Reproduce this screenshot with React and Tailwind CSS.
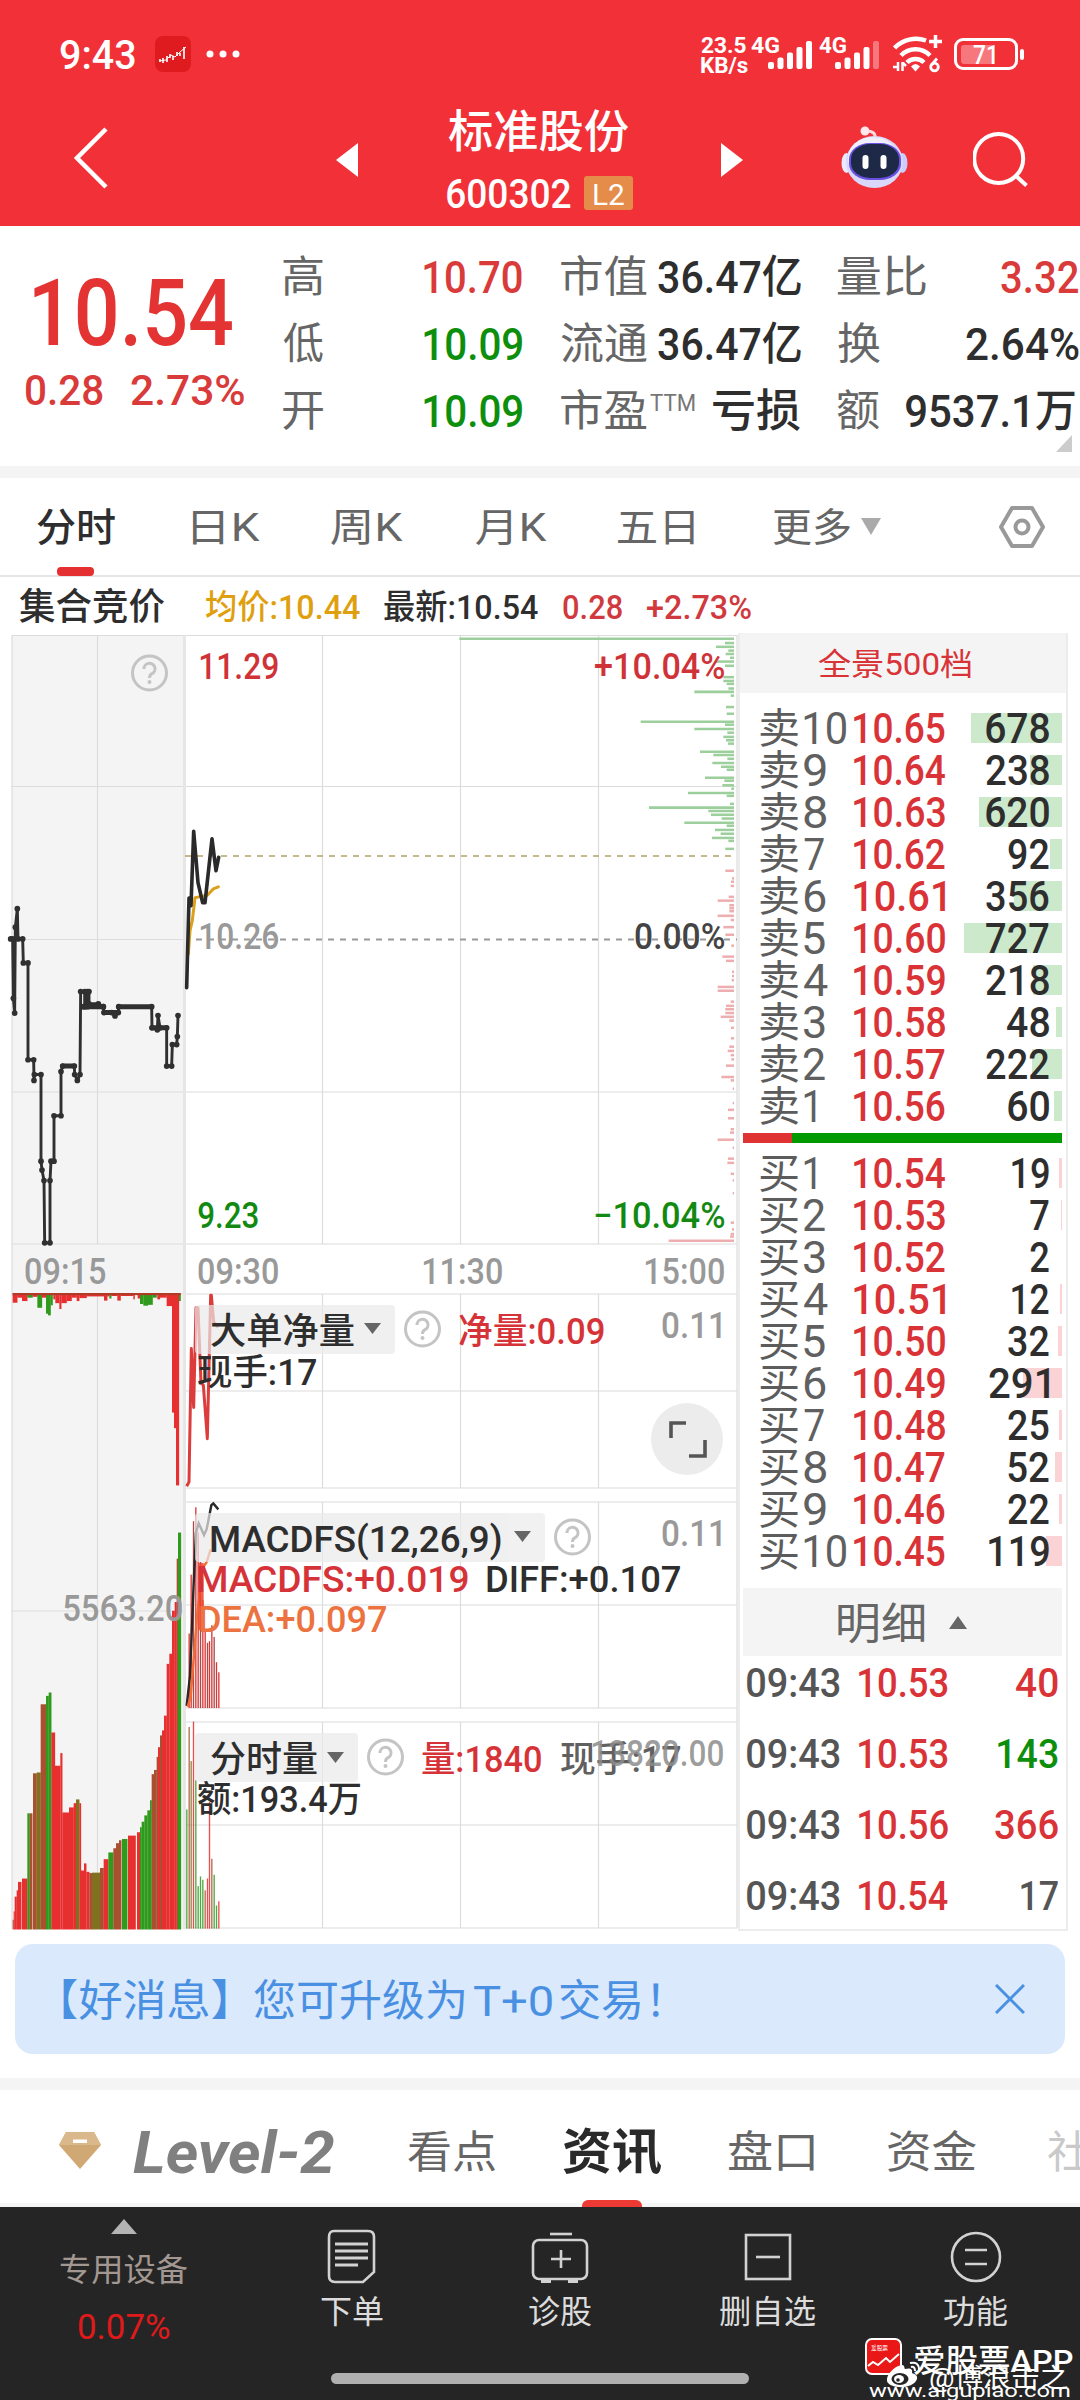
import React, { useLayoutEffect, useRef, useState } from "react";

const FONT = "font-['Roboto','Noto_Sans_CJK_SC',sans-serif]";

/* One line of text whose drawn width is `w` pixels. */
function T({ w, className = "", children }) {
  const ref = useRef(null);
  const [transform, setTransform] = useState("none");
  useLayoutEffect(() => {
    const cs = getComputedStyle(ref.current);
    const ctx = document.createElement("canvas").getContext("2d");
    ctx.font = `${cs.fontStyle} ${cs.fontWeight} ${cs.fontSize} ${cs.fontFamily}`;
    const m = ctx.measureText(ref.current.textContent);
    const s = w / (m.actualBoundingBoxLeft + m.actualBoundingBoxRight);
    setTransform(`translate(${m.actualBoundingBoxLeft * s}px, 1.5px) scaleX(${s})`);
  }, [w, children]);
  return (
    <span className={`block shrink-0 whitespace-nowrap ${className}`} style={{ width: w }}>
      <span ref={ref} className="inline-block origin-left" style={{ transform }}>
        {children}
      </span>
    </span>
  );
}

function Signal({ dim }) {
  return (
    <svg width="44" height="28" viewBox="0 0 44 28" fill="#fff">
      <rect x="0" y="21" width="6" height="7" rx="2" />
      <rect x="9.500" y="16.500" width="6" height="11.500" rx="2" />
      <rect x="19" y="11.500" width="6" height="16.500" rx="2" />
      <rect x="28.500" y="6" width="6" height="22" rx="2" />
      <rect x="38" y="0" width="6" height="28" rx="2" opacity={dim ? 0.35 : 1} />
    </svg>
  );
}

function StatusBar() {
  return (
    <div className="flex h-[108px] items-center text-white">
      <T w={75} className="ml-[60px] text-[40px] leading-[40px] font-medium">9:43</T>
      <svg className="ml-[20px]" width="36" height="36" viewBox="0 0 36 36">
        <rect width="36" height="36" rx="8" fill="#e01b1f" />
        <path d="M5 23v3M8 22v5M12 20v6M15 18v4M18 20v4M22 16v4M25 17v3M29 11v12" stroke="#fff" strokeWidth="1.600" />
        <path d="M4 25l7-1 5-5 4 2 5-5 6-5" stroke="#fff" strokeWidth="1" fill="none" />
      </svg>
      <svg className="ml-[15px]" width="34" height="8" fill="#fff">
        <circle cx="4" cy="4" r="3.500" /><circle cx="17" cy="4" r="3.500" /><circle cx="30" cy="4" r="3.500" />
      </svg>
      <div className="ml-[461px] w-[47px] text-[22px] font-bold leading-[20px]">
        <T w={45}>23.5</T>
        <T w={47}>KB/s</T>
      </div>
      <T w={28} className="-mt-[20px] ml-[3px] text-[22px] font-bold leading-[20px]">4G</T>
      <div className="-ml-[11px] mt-[2px]"><Signal /></div>
      <T w={27} className="-mt-[20px] ml-[7px] text-[22px] font-bold leading-[20px]">4G</T>
      <div className="-ml-[11px] mt-[2px]"><Signal dim /></div>
      <svg className="ml-[14px]" width="50" height="38" viewBox="0 0 50 38" fill="none" stroke="#fff" strokeWidth="4.500">
        <path d="M1.500 13A30 30 0 0 1 33 5.500" />
        <path d="M8 20.500A20 20 0 0 1 37 20.500" />
        <path d="M14 27.500A12 12 0 0 1 31 27.500" />
        <path d="M18 31.500q4.500-5 9 0l-4.500 5z" fill="#fff" stroke="none" />
        <path d="M36 6.500h13M42.500 0v13" strokeWidth="3.500" />
        <path d="M5 27v9M9.500 27v9M0 32h4M10 28l3 3" strokeWidth="2.500" />
        <circle cx="41.500" cy="32" r="3.800" strokeWidth="2.800" /><path d="M44 23.500l-5.500 6.500" strokeWidth="2.800" />
      </svg>
      <div className="ml-[11px] flex h-[32px] w-[64px] items-center rounded-[9px] border-[3px] border-white p-[4px]">
        <div className="flex h-[19px] w-[33px] items-center rounded-[3px] bg-white/35 pl-[12px]">
          <T w={22} className="text-[25px] font-medium leading-[18px]">71</T>
        </div>
      </div>
      <div className="ml-[2px] h-[11px] w-[4px] rounded-full bg-white" />
    </div>
  );
}

function Header() {
  return (
    <header className="h-[226px] shrink-0 bg-[#f13038]">
      <StatusBar />
      <div className="flex h-[118px] items-start text-white">
        <svg className="ml-[73px] mt-[19px]" width="37" height="62" viewBox="0 0 37 62" fill="none" stroke="#fff" strokeWidth="4.500">
          <path d="M33 2L4 31l29 29" />
        </svg>
        <svg className="ml-[226px] mt-[35px]" width="22" height="34" fill="#fff"><path d="M22 0v34L0 17z" /></svg>
        <div className="ml-[88px] w-[190px]">
          <T w={181} className="ml-[2px] text-[45px] font-medium leading-[46px]">标准股份</T>
          <div className="mt-[22px] flex h-[34px] items-center">
            <T w={124} className="ml-px text-[40px] font-medium leading-[40px]">600302</T>
            <div className="ml-[13px] flex h-[34px] w-[49px] items-center justify-center rounded-[3px] bg-[#e58c4a]">
              <T w={30} className="text-[30px] leading-[32px]">L2</T>
            </div>
          </div>
        </div>
        <svg className="ml-[85px] mt-[35px]" width="22" height="34" fill="#fff"><path d="M0 0v34l22-17z" /></svg>
        <svg className="ml-[98px] mt-[18px]" width="68" height="64" viewBox="0 0 68 64">
          <path d="M34 12Q35 5 25 5" stroke="#ffd9e0" strokeWidth="3" fill="none" />
          <circle cx="24" cy="5" r="4.500" fill="#ffe9ee" />
          <ellipse cx="5.500" cy="37" rx="5" ry="10" fill="#e9eaff" />
          <ellipse cx="61.500" cy="37" rx="5" ry="10" fill="#c9cdfa" />
          <ellipse cx="33.500" cy="36" rx="28.500" ry="26" fill="#d9d8fb" />
          <ellipse cx="32" cy="32" rx="25" ry="21" fill="#f0effc" />
          <rect x="8" y="17" width="52" height="37" rx="21" ry="16" fill="#6a50e0" />
          <rect x="10" y="18" width="48" height="34" rx="19" ry="15" fill="#1d2947" />
          <rect x="21.500" y="29" width="6" height="14" rx="3" fill="#fff" />
          <rect x="39.500" y="29" width="6" height="14" rx="3" fill="#fff" />
        </svg>
        <svg className="ml-[64px] mt-[23px]" width="58" height="58" viewBox="0 0 58 58" fill="none" stroke="#fff" strokeWidth="4">
          <circle cx="25.700" cy="27.400" r="24.500" /><path d="M43 45l10.500 9.500" />
        </svg>
      </div>
    </header>
  );
}

const LABEL = "text-[43px] leading-[67px] text-[#666]";
const VALUE = "text-[45px] leading-[67px] font-medium";

function Quote() {
  return (
    <section className="relative flex h-[240px] shrink-0 bg-white">
      <div className="w-[283px] shrink-0 pt-[46px] text-[#e43333]">
        <T w={198} className="ml-[34px] text-[92px] font-medium leading-[80px]">10.54</T>
        <div className="mt-[11px] flex text-[43px] font-medium leading-[50px] text-[#d93a3a]">
          <T w={77} className="ml-[26px]">0.28</T>
          <T w={113} className="ml-[28px]">2.73%</T>
        </div>
      </div>
      <div className="grow pt-[16px]">
        <div className="flex h-[67px]">
          <T w={40} className={LABEL}>高</T>
          <T w={98} className={`${VALUE} ml-[101px] text-[#d93a3a]`}>10.70</T>
          <T w={86} className={`${LABEL} ml-[39px]`}>市值</T>
          <T w={143} className={`${VALUE} ml-[11px] text-[#2e2e2e]`}>36.47亿</T>
          <T w={88} className={`${LABEL} ml-[37px]`}>量比</T>
          <T w={77} className={`${VALUE} ml-auto mr-[2px] text-[#d93a3a]`}>3.32</T>
        </div>
        <div className="flex h-[67px]">
          <T w={40} className={LABEL}>低</T>
          <T w={98} className={`${VALUE} ml-[101px] text-[#0d8f0d]`}>10.09</T>
          <T w={86} className={`${LABEL} ml-[39px]`}>流通</T>
          <T w={143} className={`${VALUE} ml-[11px] text-[#2e2e2e]`}>36.47亿</T>
          <T w={42} className={`${LABEL} ml-[37px]`}>换</T>
          <T w={113} className={`${VALUE} ml-auto mr-px text-[#2e2e2e]`}>2.64%</T>
        </div>
        <div className="flex h-[67px]">
          <T w={40} className={LABEL}>开</T>
          <T w={98} className={`${VALUE} ml-[101px] text-[#0d8f0d]`}>10.09</T>
          <T w={86} className={`${LABEL} ml-[39px]`}>市盈</T>
          <T w={45} className="ml-[3px] pt-[8px] text-[23px] leading-[36px] text-[#777]">TTM</T>
          <T w={87} className={`${VALUE} ml-[18px] text-[#2e2e2e]`}>亏损</T>
          <T w={42} className={`${LABEL} ml-[37px]`}>额</T>
          <T w={169} className={`${VALUE} ml-auto mr-[5px] text-[#2e2e2e]`}>9537.1万</T>
        </div>
      </div>
      <svg className="absolute bottom-[14px] right-[8px]" width="16" height="17" fill="#ccc"><path d="M16 0v17H0z" /></svg>
    </section>
  );
}

function PeriodTabs() {
  const t = "text-[39px] leading-[97px] text-[#666]";
  return (
    <nav className="flex h-[99px] shrink-0 border-b-2 border-[#e6e6e6] bg-white">
      <div className="ml-[37px] w-[78px]">
        <T w={78} className="h-[89px] pt-[4px] text-[39px] font-medium leading-[89px] text-[#2e2e2e]">分时</T>
        <div className="ml-[20px] h-[9px] w-[37px] rounded-[4px] bg-[#e43030]" />
      </div>
      <T w={68} className={`${t} ml-[77px]`}>日K</T>
      <T w={72} className={`${t} ml-[71px]`}>周K</T>
      <T w={71} className={`${t} ml-[73px]`}>月K</T>
      <T w={76} className={`${t} ml-[71px]`}>五日</T>
      <T w={77} className={`${t} ml-[79px]`}>更多</T>
      <svg className="ml-[11px] mt-[40px]" width="20" height="17" fill="#aaa"><path d="M0 0h20L10 17z" /></svg>
      <svg className="ml-[118px] mt-[27px]" width="46" height="44" viewBox="0 0 46 44" fill="none" stroke="#999" strokeWidth="4" strokeLinejoin="round">
        <path d="M13 3h20l11 19-11 19H13L2 22z" /><circle cx="23" cy="22" r="6.500" />
      </svg>
    </nav>
  );
}

function InfoRow() {
  return (
    <div className="flex h-[57px] shrink-0 items-center bg-white text-[34px] leading-[57px]">
      <T w={146} className="ml-[19px] text-[37px] font-medium text-[#2e2e2e]">集合竞价</T>
      <T w={154} className="ml-[41px] font-medium text-[#dfa010]">均价:10.44</T>
      <T w={154} className="ml-[24px] font-medium text-[#2e2e2e]">最新:10.54</T>
      <T w={59} className="ml-[25px] font-medium text-[#d03a3e]">0.28</T>
      <T w={104} className="ml-[25px] font-medium text-[#d03a3e]">+2.73%</T>
    </div>
  );
}

const R = "#e82f2f", G = "#2f9a1c", B = "#a85030", O = "#80701f";

/* Resting orders by price level: [y, left end] */
const asks = [[21,298],[31,1095],[40,1068],[49,1105],[57,1097],[66,1110],[75,1066],[85,1095],[112,1090],[121,1090],[128,1100],[139,1105],[147,1003],[156,1112],[183,1098],[199,1100],[218,842],[225,1095],[235,1003],[244,1102],[254,1090],[262,1098],[270,1104],[289,1020],[297,1060],[306,1102],[316,1057],[325,1083],[332,1100],[351,1035],[358,1093],[369,1087],[377,1114],[387,984],[394,1100],[413,1110],[422,867],[430,1045],[439,1053],[448,1085],[458,973],[465,1100],[475,1065],[484,1082],[494,1056],[501,1105],[520,1096]];
const bids = [[572,1096],[590,1116],[598,1113],[608,1112],[634,1106],[643,1073],[654,1108],[661,1108],[668,1108],[679,1073],[689,1112],[706,1090],[724,1096],[750,1114],[776,1087],[786,1098],[812,1116],[822,1116],[832,1115],[848,1073],[857,1073],[883,1112],[893,1098],[901,1096],[910,1096],[919,1082],[928,1108],[945,1113],[970,1113],[990,1108],[1000,1103],[1010,1112],[1020,1114],[1035,1098],[1062,1084],[1070,1112],[1090,1118],[1124,1118],[1140,1104],[1160,1104],[1186,1112],[1194,1110],[1211,1073],[1230,1118],[1256,1104],[1266,1102],[1292,1112],[1308,1118],[1338,1118],[1408,1112],[1424,1116],[1435,1112],[1441,1110],[1451,926]];

const auction = "32,734 38,734 40,875 44,910 46,706 52,662 54,734 68,734 70,791 84,791 84,1021 101,1021 102,1070 103,1056 123,1056 123,1262 126,1283 132,1308 134,1456 150,1456 150,1308 153,1262 162,1262 162,1154 183,1154 183,1049 188,1036 223,1036 224,1056 232,1070 240,1056 242,859 254,859 254,895 262,895 262,859 267,859 267,888 295,888 310,895 250,895 310,895 312,909 335,909 345,917 355,909 356,895 455,895 456,945 472,950 474,916 480,945 500,945 500,1036 515,1036 517,985 530,985 532,966 534,916";

/* Auction volume columns: [x0, x1, top, colour] */
const columns = [[38,41,1520,B],[41,44,1500,R],[44,50,1465,R],[50,54,1450,R],[54,64,1430,R],[66,82,1422,R],[82,89,1267,G],[89,97,1267,B],[99,110,1172,B],[110,122,1170,O],[122,138,1008,B],[138,146,988,G],[146,154,980,G],[154,165,1075,R],[165,181,1154,R],[181,187,1124,R],[187,207,1265,R],[207,221,1253,R],[221,228,1243,R],[228,238,1234,O],[238,243,1243,R],[243,252,1403,R],[252,259,1386,R],[259,268,1406,R],[268,276,1409,B],[276,300,1408,O],[300,311,1397,B],[311,325,1376,R],[325,340,1360,G],[340,348,1350,B],[348,357,1338,B],[357,364,1331,B],[366,382,1328,G],[384,407,1320,R],[411,420,1312,R],[420,425,1300,G],[425,433,1287,G],[433,442,1272,G],[442,450,1260,G],[450,455,1236,G],[455,462,1174,B],[462,470,1164,B],[470,474,1133,B],[474,480,1110,R],[480,486,1082,B],[486,492,1070,R],[492,500,1035,R],[500,508,912,R],[508,516,888,R],[516,524,786,R],[524,530,765,R],[530,534,662,B],[534,543,600,G]];
const flows = [[38,52,54,R],[52,66,42,R],[66,82,50,R],[82,98,42,G],[98,112,40,R],[112,126,66,G],[126,138,42,R],[138,144,80,G],[144,152,84,G],[152,158,60,G],[160,166,46,R],[166,178,55,R],[178,184,69,R],[184,200,55,R],[200,215,50,R],[215,230,42,R],[230,238,50,R],[238,260,43,R],[260,312,39,R],[312,322,49,R],[322,328,39,R],[328,334,44,G],[334,352,38,R],[352,362,49,R],[362,400,38,R],[400,404,46,R],[413,420,44,R],[420,430,57,G],[430,444,61,G],[444,458,59,G],[458,470,42,G],[472,480,46,R],[480,500,42,R],[500,516,62,R],[516,522,315,R],[522,528,352,R],[528,537,488,R],[537,542,50,G]];
const macd = [[567,840],[573,700],[580,573],[587,540],[594,600],[601,670],[608,760],[615,830],[622,862],[628,858],[635,820],[642,848],[649,908],[656,932]];
const volume = [[560,1258,G],[567,1062,B],[573,1143,O],[580,1049,R],[587,1188,G],[594,1440,G],[601,1417,G],[608,1425,G],[615,1450,B],[622,1422,R],[628,1240,R],[635,1375,B],[642,1413,G],[649,1486,G],[656,1476,R]];

function Question({ cx, cy }) {
  return (
    <g fill="none" stroke="#c4c4c4" strokeWidth="3">
      <circle cx={cx} cy={cy} r="17" />
      <path d={`M${cx - 5.5} ${cy - 4}a5.500 5.500 0 1 1 8 4.700q-2.500 1.300-2.500 4.300`} />
      <circle cx={cx} cy={cy + 9} r="2" fill="#c4c4c4" stroke="none" />
    </g>
  );
}

function ChartCanvas() {
  return (
    <svg className="block" width="738" height="1297" viewBox="0 634 738 1297">
      <rect x="12" y="635" width="172" height="1294" fill="#f4f4f4" />
      <g stroke="#dcdcdc" strokeWidth="1.200" fill="none">
        <path d="M12 635.500H737M12 786.500H737M12 939.500H184M184 1092H737M12 1092H184M12 1244H737M12 635V1929M97.500 635V1244M97.500 1294V1929M12 1294H737M184 1391H737M184 1488H737M184 1502H737M184 1605H737M12 1611H184M184 1708H737M184 1722H737M184 1825H737M184 1928H737M737 635V1928" />
        <path d="M322.500 635V1244M460.500 635V1244M598.500 635V1244M322.500 1294V1488M460.500 1294V1488M598.500 1294V1488M322.500 1502V1708M460.500 1502V1708M598.500 1502V1708M322.500 1722V1928M460.500 1722V1928M598.500 1722V1928" />
      </g>
      <path d="M184.500 635V1929" stroke="#e6e6e6" strokeWidth="3" />
      <path d="M185 856H737" stroke="#b3a263" strokeWidth="1.600" strokeDasharray="6 6" />
      <path d="M196 939.500H737" stroke="#999" strokeWidth="2" strokeDasharray="6 6" />
      <g transform="translate(360 630) scale(.333333 .420918)">
        {asks.map(([y, x]) => <path key={y} d={`M${x} ${y}H1122`} stroke="#9ccf9c" strokeWidth="6" />)}
        {bids.map(([y, x]) => <path key={y} d={`M${x} ${y}H1122`} stroke="#eeaeb0" strokeWidth="6" />)}
      </g>
      <g transform="translate(0 630) scale(.333333 .420918)" fill="none" strokeLinejoin="round" strokeLinecap="round">
        <polyline points={auction} stroke="#303030" strokeWidth="2.900" vectorEffect="non-scaling-stroke" />
        {auction.split(" ").map((p, i) => {
          const [x, y] = p.split(",");
          return <ellipse key={i} cx={x} cy={y} rx="8.500" ry="6.800" fill="#303030" />;
        })}
        <path d="M188 1036H223M250 895H310M312 909H350M356 895H455M456 945H500" stroke="#303030" strokeWidth="5" vectorEffect="non-scaling-stroke" />
        <polyline points="565,770 570,715 577,690 585,636 597,634 622,630 640,615 655,610" stroke="#dda01c" strokeWidth="3" vectorEffect="non-scaling-stroke" />
        <polyline points="560,850 567,637 573,655 581,478 594,600 608,648 615,648 636,496 648,572 656,540" stroke="#2a2a2a" strokeWidth="3.600" vectorEffect="non-scaling-stroke" />
      </g>
      <g transform="translate(0 1280) scale(.333333 .420918)" fill="none">
        {columns.map(([a, b, t, c]) => <rect key={a} x={a} y={t} width={b - a + 0.4} height={1543 - t} fill={c} />)}
        {flows.map(([a, b, t, c]) => <rect key={a} x={a} y="31" width={b - a + 0.4} height={t - 31} fill={c} />)}
        <rect x="38" y="31" width="504" height="5" fill="#b03a28" />
        <polyline points="560,490 567,480 574,163 581,303 588,66 594,66 603,245 610,250 622,377 632,36 634,36 641,100 655,112" stroke="#dc3c3c" strokeWidth="3" vectorEffect="non-scaling-stroke" strokeLinejoin="round" />
        {macd.map(([x, t], i) => <rect key={x} x={x - 1.5} y={t} width="4" height={1017 - t} fill={i % 3 === 2 ? "#a84a4a" : "#dc3535"} />)}
        <polyline points="560,1012 570,940 580,740 588,600 596,578 603,590 612,606 620,592 634,535 640,531 655,545" stroke="#282828" strokeWidth="2.400" vectorEffect="non-scaling-stroke" />
        <polyline points="563,1014 572,990 582,890 592,790 601,735 604,690 620,670 632,640" stroke="#f26b33" strokeWidth="2.400" vectorEffect="non-scaling-stroke" />
        <rect x="596" y="672" width="15" height="160" fill="#f0452b" opacity=".85" />
        {volume.map(([x, t, c]) => <rect key={x} x={x - 1.5} y={t} width="4" height={1541 - t} fill={c} opacity=".85" />)}
      </g>
      <g fill="#ebebeb" opacity=".7">
        <rect x="195" y="1305" width="200" height="49" rx="4" />
        <rect x="195" y="1513" width="350" height="49" rx="4" />
        <rect x="195" y="1733" width="163" height="49" rx="4" />
      </g>
      <g fill="#666">
        <path d="M364 1323h17l-8.500 11zM514 1531h17l-8.500 11zM327 1752h17l-8.500 11z" />
      </g>
      <Question cx={149.5} cy={673} />
      <Question cx={422.5} cy={1329} />
      <Question cx={572.5} cy={1537} />
      <Question cx={385.5} cy={1757} />
      <circle cx="687" cy="1439" r="36" fill="#ececec" />
      <path d="M671 1438v-15h15M689 1456h16v-16" fill="none" stroke="#555" strokeWidth="3.600" />
    </svg>
  );
}

function Charts() {
  const t = "absolute leading-[40px] font-medium";
  return (
    <div className="relative h-[1297px] w-[738px] shrink-0 text-[36px] text-[#2e2e2e]">
      <ChartCanvas />
      <T w={78} className={`${t} left-[200px] top-[11px] text-[#cf3338]`}>11.29</T>
      <T w={129} className={`${t} left-[595px] top-[11px] text-[#cf3338]`}>+10.04%</T>
      <T w={78} className={`${t} left-[200px] top-[281px] text-[#999]`}>10.26</T>
      <T w={89} className={`${t} left-[635px] top-[281px] text-[#444]`}>0.00%</T>
      <T w={60} className={`${t} left-[198px] top-[560px] text-[#128a12]`}>9.23</T>
      <T w={129} className={`${t} left-[595px] top-[560px] text-[#128a12]`}>−10.04%</T>
      <T w={80} className={`${t} left-[25px] top-[616px] text-[#999]`}>09:15</T>
      <T w={80} className={`${t} left-[198px] top-[616px] text-[#999]`}>09:30</T>
      <T w={79} className={`${t} left-[423px] top-[616px] text-[#999]`}>11:30</T>
      <T w={79} className={`${t} left-[645px] top-[616px] text-[#999]`}>15:00</T>

      <T w={143} className={`${t} left-[211px] top-[676px]`}>大单净量</T>
      <T w={145} className={`${t} left-[459px] top-[676px] text-[#d63338]`}>净量:0.09</T>
      <T w={59} className={`${t} left-[662px] top-[670px] text-[#999]`}>0.11</T>
      <T w={118} className={`${t} left-[198px] top-[717px]`}>现手:17</T>

      <T w={290} className={`${t} left-[211px] top-[884px]`}>MACDFS(12,26,9)</T>
      <T w={59} className={`${t} left-[662px] top-[878px] text-[#999]`}>0.11</T>
      <T w={270} className={`${t} left-[198px] top-[924px] text-[#d63338]`}>MACDFS:+0.019</T>
      <T w={193} className={`${t} left-[487px] top-[924px]`}>DIFF:+0.107</T>
      <T w={186} className={`${t} left-[200px] top-[964px] text-[#ec7340]`}>DEA:+0.097</T>
      <T w={118} className={`${t} left-[64px] top-[953px] text-[#999]`}>5563.20</T>

      <T w={106} className={`${t} left-[211px] top-[1104px]`}>分时量</T>
      <T w={119} className={`${t} left-[422px] top-[1104px] text-[#d63338]`}>量:1840</T>
      <T w={119} className={`${t} left-[561px] top-[1104px] text-[#606060]`}>现手:17</T>
      <T w={131} className={`${t} left-[592px] top-[1098px] text-[#8c8c8c]/85`}>13820.00</T>
      <T w={162} className={`${t} left-[198px] top-[1144px]`}>额:193.4万</T>
    </div>
  );
}

const sells = [["10", 42, "10.65", 678, 63], ["9", 22, "10.64", 238, 63], ["8", 22, "10.63", 620, 63], ["7", 20, "10.62", 92, 41], ["6", 22, "10.61", 356, 63], ["5", 21, "10.60", 727, 63], ["4", 24, "10.59", 218, 63], ["3", 21, "10.58", 48, 42], ["2", 21, "10.57", 222, 63], ["1", 12, "10.56", 60, 41]];
const buys = [["1", 12, "10.54", 19, 37], ["2", 21, "10.53", 7, 19], ["3", 21, "10.52", 2, 19], ["4", 24, "10.51", 12, 37], ["5", 21, "10.50", 32, 41], ["6", 22, "10.49", 291, 60], ["7", 20, "10.48", 25, 41], ["8", 22, "10.47", 52, 41], ["9", 22, "10.46", 22, 41], ["10", 42, "10.45", 119, 60]];
const trades = [["10.53", "40", 42, "text-[#d93338]"], ["10.53", "143", 60, "text-[#0d8f0d]"], ["10.56", "366", 63, "text-[#d93338]"], ["10.54", "17", 37, "text-[#555]"]];

function Levels({ side, rows, bar }) {
  return rows.map(([n, nw, price, qty, qw]) => (
    <div key={n} className="relative flex h-[42px] items-center pl-[20px] pr-[17px] text-[42px] leading-[42px]">
      <div className={`absolute right-[4px] top-[7px] h-[30px] ${bar}`} style={{ width: Math.round(qty * 0.1345) }} />
      <T w={38} className="text-[41px] text-[#5c5c5c]">{side}</T>
      <T w={nw} className="ml-[6px] text-[45px] text-[#606060]">{n}</T>
      <div className="relative ml-auto flex">
        <T w={91} className="font-medium text-[#d93338]">{price}</T>
        <div className="flex w-[104px] justify-end"><T w={qw} className="font-medium text-[#2e2e2e]">{qty}</T></div>
      </div>
    </div>
  ));
}

function OrderBook() {
  return (
    <div className="-mt-px h-[1298px] w-[330px] border-2 border-t-0 border-[#ececec] bg-white">
      <div className="flex h-[60px] items-center bg-[#f4f4f4]">
        <T w={153} className="ml-[78px] text-[31px] leading-[60px] text-[#d93338]">全景500档</T>
      </div>
      <div className="pt-[13px]"><Levels side="卖" rows={sells} bar="bg-[#cce9cc]" /></div>
      <div className="ml-[3px] mr-[4px] mt-[7px] flex h-[10px]">
        <div className="w-[49px] bg-[#e03434]" />
        <div className="grow bg-[#009900]" />
      </div>
      <div className="pt-[8px]"><Levels side="买" rows={buys} bar="bg-[#fbd3d5]" /></div>
      <div className="ml-[3px] mr-[4px] mt-[17px] flex h-[68px] items-center bg-[#f4f4f4]">
        <T w={86} className="ml-[95px] text-[43px] leading-[68px] text-[#666]">明细</T>
        <svg className="ml-[25px]" width="18" height="13" fill="#666"><path d="M9 0l9 13H0z" /></svg>
      </div>
      <div className="-mt-[10px]">
        {trades.map(([price, qty, w, color], i) => (
          <div key={i} className="flex h-[71px] pl-[7px] pr-[8px] text-[41px] font-medium leading-[71px]">
            <T w={93} className="text-[#555]">09:43</T>
            <T w={89} className="ml-[19px] text-[#d93338]">{price}</T>
            <T w={w} className={`ml-auto ${color}`}>{qty}</T>
          </div>
        ))}
      </div>
    </div>
  );
}

function Banner() {
  return (
    <div className="mx-[15px] mt-[13px] flex h-[110px] shrink-0 items-center rounded-[18px] bg-[#dae9fc] text-[43px] leading-[108px] text-[#4a90e2]">
      <T w={163} className="ml-[48px]">【好消息】</T>
      <T w={210} className="ml-[28px]">您可升级为</T>
      <T w={78} className="ml-[10px]">T+0</T>
      <T w={80} className="ml-[8px]">交易</T>
      <T w={7} className="ml-[12px]">！</T>
      <svg className="ml-[336px]" width="30" height="30" viewBox="0 0 30 30" stroke="#4a90e2" strokeWidth="3"><path d="M1 1l28 28M29 1L1 29" /></svg>
    </div>
  );
}

function SectionTabs() {
  const t = "text-[44px] leading-[122px] text-[#666]";
  return (
    <nav className="relative flex h-[117px] shrink-0 border-b-4 border-[#f6f6f6] bg-white">
      <svg className="ml-[59px] mt-[42px] shrink-0" width="42" height="37" viewBox="0 0 42 37">
        <path d="M7 0h28l7 13-21 24L0 13z" fill="#d0a874" /><path d="M7 0h28l7 13H0z" fill="#d9b98c" />
        <rect x="14" y="7.500" width="14" height="3.500" fill="#fff" />
      </svg>
      <T w={201} className="ml-[32px] text-[59px] font-bold italic leading-[122px] text-[#808080]">Level-2</T>
      <T w={87} className={`${t} ml-[74px]`}>看点</T>
      <T w={99} className="ml-[68px] text-[49px] font-bold leading-[122px] text-[#2a2a2a]">资讯</T>
      <T w={86} className={`${t} ml-[66px]`}>盘口</T>
      <T w={88} className={`${t} ml-[74px]`}>资金</T>
      <T w={42} className={`${t} ml-[72px] opacity-35`}>社</T>
      <div className="absolute -bottom-[4px] left-[582px] h-[7px] w-[60px] rounded-t-[6px] bg-[#ee3a35]" />
    </nav>
  );
}

function Action({ className, w, label, children }) {
  return (
    <div className={`flex flex-col items-center ${className}`}>
      <svg className="shrink-0" width="60" height="60" viewBox="0 0 60 60" fill="none" stroke="#d2d2d2" strokeWidth="2.600">{children}</svg>
      <T w={w} className="mt-[1px] text-[32px] leading-[44px] text-[#dcdcdc]">{label}</T>
    </div>
  );
}

function BottomBar() {
  return (
    <footer className="relative flex h-[193px] shrink-0 bg-[#252525]">
      <div className="ml-[60px] flex w-[128px] flex-col items-center">
        <svg className="mt-[12px]" width="26" height="15" fill="#b4b4b4"><path d="M13 0l13 15H0z" /></svg>
        <T w={128} className="mt-[14px] text-[32px] leading-[40px] text-[#a39891]">专用设备</T>
        <T w={92} className="mt-[18px] text-[35px] leading-[40px] text-[#e01a1a]">0.07%</T>
      </div>
      <Action className="ml-[133px] w-[62px] pt-[20px]" w={62} label="下单">
        <path d="M12 4h34q6 0 6 6v35L41 55H13q-6 0-6-6V10q0-6 5-6z" />
        <path d="M13 17h33M13 24h33M13 31h33M13 38h23" strokeWidth="2.800" />
      </Action>
      <Action className="ml-[146px] w-[62px] pt-[20px]" w={62} label="诊股">
        <path d="M20 7h22" /><rect x="3" y="13" width="54" height="39" rx="6" />
        <path d="M31 23v18M21 32h20" /><path d="M11 54h10M38 54h10" strokeWidth="4" />
      </Action>
      <Action className="ml-[129px] w-[95px] pt-[20px]" w={95} label="删自选">
        <rect x="8" y="8" width="44" height="44" /><path d="M18 30h24" />
      </Action>
      <Action className="ml-[129px] w-[63px] pt-[20px]" w={63} label="功能">
        <circle cx="30" cy="30" r="24" /><path d="M19 23h22M19 37h22" />
      </Action>
      <div className="absolute left-[331px] top-[166px] h-[11px] w-[418px] rounded-full bg-[#b0b0b0]" />
      <div className="absolute left-[865px] top-[131px] text-white">
        <svg className="absolute left-0 top-0" width="37" height="37" viewBox="0 0 37 37">
          <rect x="1" y="1" width="35" height="35" rx="6" fill="#ea1717" stroke="#fff" strokeWidth="2" />
          <path d="M3 28l5-4 5 3 8-7 4 4 9-8" stroke="#fff" strokeWidth="2" fill="none" />
        </svg>
        <T w={17} className="absolute left-[6px] top-[4px] text-[6px] leading-[8px]">爱股票</T>
        <T w={159} className="absolute left-[49px] top-0 text-[32px] font-medium leading-[42px]">爱股票APP</T>
        <T w={137} className="absolute left-[65px] top-[22px] text-[26px] leading-[32px]">@博浪击之</T>
        <T w={201} className="absolute left-[4px] top-[42px] text-[19px] leading-[18px]">www.aigupiao.com</T>
        <svg className="absolute left-[21px] top-[22px]" width="40" height="30" viewBox="0 0 40 30">
          <path d="M16 5C8 6 0 15 1 21c2 8 26 9 30-2 1-4-3-5-5-6 1-5-3-5-7-4-1-1 0-4-3-4z" fill="#fff" />
          <ellipse cx="14" cy="19" rx="8.500" ry="6" fill="#252525" /><ellipse cx="13" cy="19" rx="5" ry="4" fill="#fff" /><circle cx="12" cy="20" r="1.800" fill="#252525" />
          <path d="M24 3q9-2 9 7M25 7q4-1 4 4" stroke="#fff" strokeWidth="2" fill="none" />
        </svg>
      </div>
    </footer>
  );
}

export default function App() {
  return (
    <div className={`flex h-[2400px] w-[1080px] flex-col overflow-hidden bg-white ${FONT}`}>
      <Header />
      <Quote />
      <div className="h-[12px] shrink-0 bg-[#f4f4f4]" />
      <PeriodTabs />
      <InfoRow />
      <main className="flex h-[1297px] shrink-0">
        <Charts />
        <OrderBook />
      </main>
      <Banner />
      <div className="mt-[24px] h-[12px] shrink-0 bg-[#f4f4f4]" />
      <SectionTabs />
      <BottomBar />
    </div>
  );
}
